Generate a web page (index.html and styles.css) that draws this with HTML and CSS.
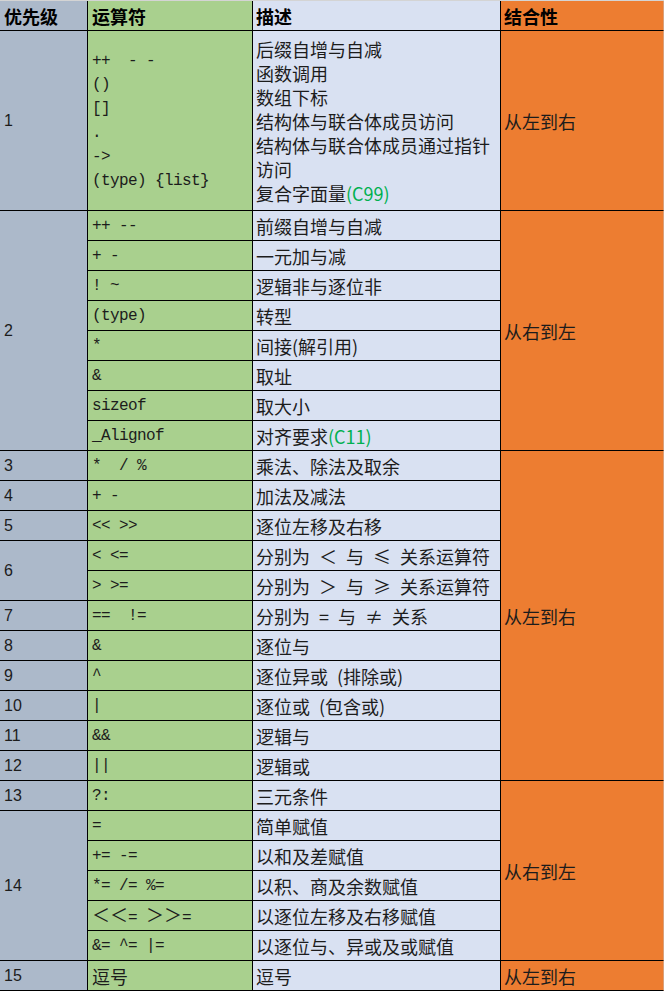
FILE: index.html
```html
<!DOCTYPE html>
<html lang="zh-CN">
<head>
<meta charset="utf-8">
<title>C 运算符优先级</title>
<link rel="stylesheet" href="styles.css">
</head>
<body>
<div class="table">
  <div class="c p hd">优先级</div>
  <div class="c o hd">运算符</div>
  <div class="c d hd">描述</div>
  <div class="c a hd">结合性</div>

  <div class="c p">1</div>
  <div class="c o"><div>++&nbsp;&nbsp;- -<br>()<br>[]<br>.<br>-&gt;<br>(type) {list}</div></div>
  <div class="c d"><div>后缀自增与自减<br>函数调用<br>数组下标<br>结构体与联合体成员访问<br>结构体与联合体成员通过指针<br>访问<br>复合字面量<span class="std">(C99)</span></div></div>
  <div class="c a">从左到右</div>

  <div class="c p s8">2</div>
  <div class="c o">++ --</div>
  <div class="c d">前缀自增与自减</div>
  <div class="c a s8">从右到左</div>
  <div class="c o">+ -</div>
  <div class="c d">一元加与减</div>
  <div class="c o">! ~</div>
  <div class="c d">逻辑非与逐位非</div>
  <div class="c o">(type)</div>
  <div class="c d">转型</div>
  <div class="c o">*</div>
  <div class="c d">间接(解引用)</div>
  <div class="c o">&amp;</div>
  <div class="c d">取址</div>
  <div class="c o">sizeof</div>
  <div class="c d">取大小</div>
  <div class="c o">_Alignof</div>
  <div class="c d"><div>对齐要求<span class="std">(C11)</span></div></div>

  <div class="c p">3</div>
  <div class="c o">*&nbsp;&nbsp;/ %</div>
  <div class="c d">乘法、除法及取余</div>
  <div class="c a s11">从左到右</div>

  <div class="c p">4</div>
  <div class="c o">+ -</div>
  <div class="c d">加法及减法</div>

  <div class="c p">5</div>
  <div class="c o">&lt;&lt; &gt;&gt;</div>
  <div class="c d">逐位左移及右移</div>

  <div class="c p s2">6</div>
  <div class="c o">&lt; &lt;=</div>
  <div class="c d">分别为&ensp;＜&ensp;与&ensp;≤&ensp;关系运算符</div>
  <div class="c o">&gt; &gt;=</div>
  <div class="c d">分别为&ensp;＞&ensp;与&ensp;≥&ensp;关系运算符</div>

  <div class="c p">7</div>
  <div class="c o">==&nbsp;&nbsp;!=</div>
  <div class="c d">分别为&ensp;=&ensp;与&ensp;≠&ensp;关系</div>

  <div class="c p">8</div>
  <div class="c o">&amp;</div>
  <div class="c d">逐位与</div>

  <div class="c p">9</div>
  <div class="c o">^</div>
  <div class="c d">逐位异或&ensp;(排除或)</div>

  <div class="c p">10</div>
  <div class="c o">|</div>
  <div class="c d">逐位或&ensp;(包含或)</div>

  <div class="c p">11</div>
  <div class="c o">&amp;&amp;</div>
  <div class="c d">逻辑与</div>

  <div class="c p">12</div>
  <div class="c o">||</div>
  <div class="c d">逻辑或</div>

  <div class="c p">13</div>
  <div class="c o">?:</div>
  <div class="c d">三元条件</div>
  <div class="c a s6">从右到左</div>

  <div class="c p s5">14</div>
  <div class="c o">=</div>
  <div class="c d">简单赋值</div>
  <div class="c o">+= -=</div>
  <div class="c d">以和及差赋值</div>
  <div class="c o">*= /= %=</div>
  <div class="c d">以积、商及余数赋值</div>
  <div class="c o"><div><span class="fw">＜＜</span>= <span class="fw">＞＞</span>=</div></div>
  <div class="c d">以逐位左移及右移赋值</div>
  <div class="c o">&amp;= ^= |=</div>
  <div class="c d">以逐位与、异或及或赋值</div>

  <div class="c p">15</div>
  <div class="c o cjk">逗号</div>
  <div class="c d">逗号</div>
  <div class="c a">从左到右</div>
</div>
</body>
</html>
```

FILE: styles.css
```css
html, body {
  margin: 0;
  padding: 0;
  background: #ffffff;
}

.table {
  display: grid;
  grid-template-columns: 88px 165px 248px 163px;
  grid-template-rows: 30px 180px repeat(26, 30px);
  width: 664px;
  border-top: 1px solid #d4d4d4;
}

.c {
  box-sizing: border-box;
  display: flex;
  align-items: center;
  border-right: 1px solid #000;
  border-bottom: 1px solid #000;
  color: #1c1c1c;
  font-family: "Noto Sans CJK SC", sans-serif;
  font-size: 18px;
  line-height: 24px;
  padding-top: 1px;
  white-space: pre;
}

.p {
  background: #acb9ca;
  padding-left: 4px;
  font-family: "Liberation Sans", Arial, sans-serif;
  font-size: 16px;
}

.o {
  background: #a9d08e;
  padding-left: 4px;
  font-family: "Liberation Mono", "Noto Sans CJK SC", monospace;
  font-size: 16px;
  letter-spacing: -0.6px;
}

.o.cjk {
  font-family: "Noto Sans CJK SC", sans-serif;
  font-size: 18px;
  letter-spacing: 0;
}

.fw {
  font-family: "Noto Sans CJK SC", sans-serif;
  font-size: 18px;
  letter-spacing: 0;
}

.d {
  background: #d9e1f2;
  padding-left: 3px;
}

.a {
  background: #ed7d31;
  padding-left: 3px;
  border-right-color: #d9a07a;
}

.hd {
  font-family: "Noto Sans CJK SC", sans-serif;
  font-size: 18px;
  font-weight: bold;
  color: #000;
  letter-spacing: 0;
}

.std {
  color: #00b050;
}

.s2 { grid-row: span 2; }
.s5 { grid-row: span 5; }
.s6 { grid-row: span 6; }
.s8 { grid-row: span 8; }
.s11 { grid-row: span 11; }
```
